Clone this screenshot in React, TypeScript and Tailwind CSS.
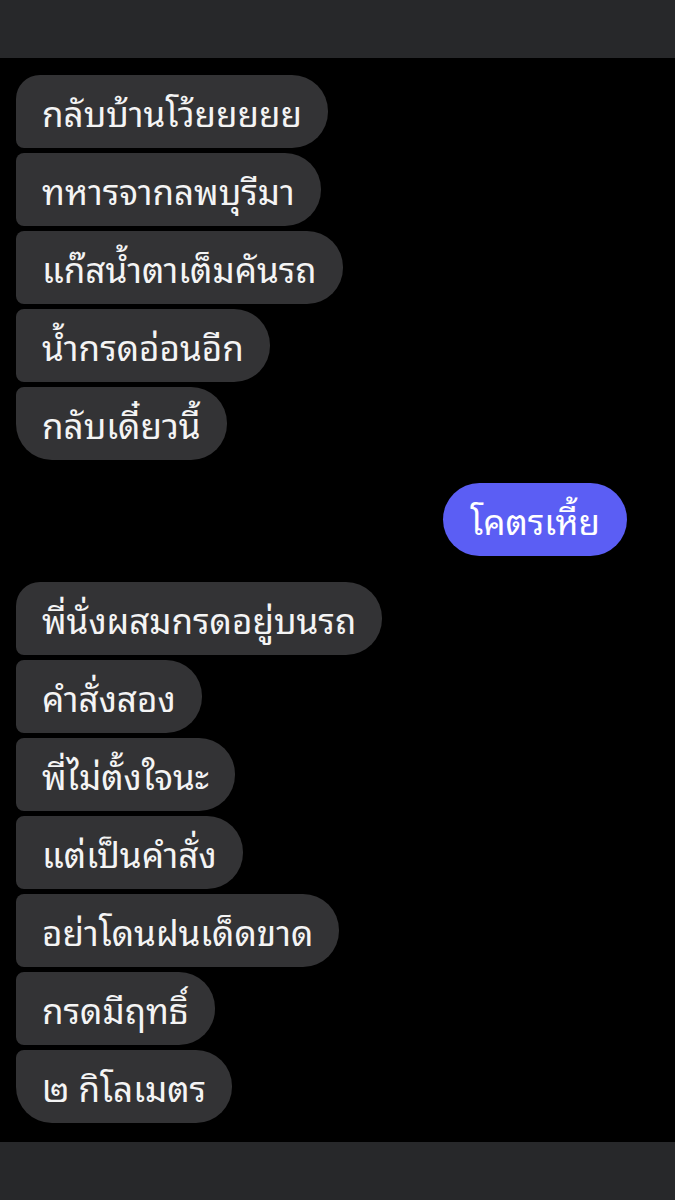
const groupA = [
  "กลับบ้านโว้ยยยยย",
  "ทหารจากลพบุรีมา",
  "แก๊สน้ำตาเต็มคันรถ",
  "น้ำกรดอ่อนอีก",
  "กลับเดี๋ยวนี้",
];

const groupB = [
  "พี่นั่งผสมกรดอยู่บนรถ",
  "คำสั่งสอง",
  "พี่ไม่ตั้งใจนะ",
  "แต่เป็นคำสั่ง",
  "อย่าโดนฝนเด็ดขาด",
  "กรดมีฤทธิ์",
  "๒ กิโลเมตร",
];

function Bubble({ text, first, last }: { text: string; first: boolean; last: boolean }) {
  return (
    <div
      className={
        "self-start bg-[#333335] text-[#f4f4f4] text-[35px] leading-[45px] pl-[26px] pr-[26px] py-[14px] rounded-r-[36px] " +
        (first ? "rounded-tl-[24px] " : "rounded-tl-[8px] ") +
        (last ? "rounded-bl-[36px]" : "rounded-bl-[8px]")
      }
    >
      {text}
    </div>
  );
}

function Group({ items }: { items: string[] }) {
  return (
    <div className="flex flex-col gap-[5px] pl-[16px]">
      {items.map((t, i) => (
        <Bubble key={i} text={t} first={i === 0} last={i === items.length - 1} />
      ))}
    </div>
  );
}

export default function App() {
  return (
    <div
      className="w-[675px] h-[1200px] bg-black flex flex-col overflow-hidden"
      style={{
        fontFamily:
          '"Noto Sans Thai Looped", "Loma", "Garuda", "Tlwg Typo", "Noto Serif Thai", "Noto Sans Thai", sans-serif',
      }}
    >
      {/* top bar */}
      <div className="h-[58px] shrink-0 bg-[#27282a]" />

      <div className="flex-1 flex flex-col pt-[17px]">
        <Group items={groupA} />

        {/* outgoing */}
        <div className="flex justify-end pr-[48px] mt-[23px]">
          <div className="bg-[#5b5ef4] text-white text-[35px] leading-[45px] px-[27px] py-[14px] rounded-full">
            โคตรเหี้ย
          </div>
        </div>

        <div className="mt-[26px]">
          <Group items={groupB} />
        </div>
      </div>

      {/* bottom bar */}
      <div className="h-[58px] shrink-0 bg-[#27282a]" />
    </div>
  );
}
